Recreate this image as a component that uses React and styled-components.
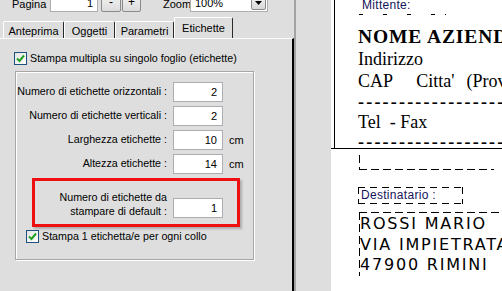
import React from "react";
import styled, { createGlobalStyle, css } from "styled-components";

const GlobalStyle = createGlobalStyle`
  html, body { margin: 0; padding: 0; }
  body { background: #dedede; }
`;

// dashed edges drawn as gradients, so dash length can follow the preview
const dashLine = (dir, d, g) =>
  `repeating-linear-gradient(${dir}, #000 0 ${d}px, transparent ${d}px ${d + g}px)`;

const dashed = ({ $sides = "trbl", $dash = 7, $gap = 5 }) => {
  const imgs = [];
  const pos = [];
  const size = [];
  if ($sides.includes("t")) {
    imgs.push(dashLine("90deg", $dash, $gap));
    pos.push("left top");
    size.push("100% 1px");
  }
  if ($sides.includes("b")) {
    imgs.push(dashLine("90deg", $dash, $gap));
    pos.push("left bottom");
    size.push("100% 1px");
  }
  if ($sides.includes("l")) {
    imgs.push(dashLine("180deg", $dash, $gap));
    pos.push("left top");
    size.push("1px 100%");
  }
  if ($sides.includes("r")) {
    imgs.push(dashLine("180deg", $dash, $gap));
    pos.push("right top");
    size.push("1px 100%");
  }
  return css`
    background-image: ${imgs.join(", ")};
    background-position: ${pos.join(", ")};
    background-size: ${size.join(", ")};
    background-repeat: no-repeat;
  `;
};

const Screen = styled.div`
  width: 502px;
  height: 291px;
  display: flex;
  overflow: hidden;
  background: #dedede;
  font-family: "Liberation Sans", Tahoma, Arial, sans-serif;
  font-size: 10.7px;
  color: #000;
`;

const LeftPane = styled.div`
  width: 294px;
  flex: none;
  display: flex;
  flex-direction: column;
`;

const Toolbar = styled.div`
  height: 21px;
  margin-top: -9px;
  display: flex;
  align-items: center;
  padding-left: 12px;
`;

const ToolLabel = styled.span`
  width: ${(p) => p.$w}px;
  margin-left: ${(p) => p.$ml || 0}px;
  padding-top: 5px;
  font-size: 11px;
`;

const ToolInput = styled.div`
  box-sizing: border-box;
  width: ${(p) => p.$w}px;
  height: 20px;
  background: #fff;
  border: 1px solid #abadb3;
  display: flex;
  align-items: flex-end;
  justify-content: ${(p) => (p.$left ? "flex-start" : "flex-end")};
  padding: 0 4px 2px;
  font-size: 11px;
  position: relative;
`;

const ToolButton = styled.div`
  box-sizing: border-box;
  width: ${(p) => p.$w}px;
  height: 20px;
  margin-left: ${(p) => p.$ml}px;
  border: 1px solid #8a8a8a;
  border-radius: 2px;
  background: linear-gradient(#f6f6f6, #dcdcdc);
  display: flex;
  align-items: flex-end;
  justify-content: center;
  padding-bottom: 2px;
  font-size: 12px;
`;

const DropButton = styled.div`
  position: absolute;
  right: 1px;
  top: 1px;
  width: 15px;
  height: 16px;
  box-sizing: border-box;
  border: 1px solid #8a8a8a;
  border-radius: 2px;
  background: linear-gradient(#f6f6f6, #d8d8d8);
  display: flex;
  align-items: flex-end;
  justify-content: center;
  padding-bottom: 4px;
`;

const TabStrip = styled.div`
  height: 20px;
  margin-top: 6px;
  padding-left: 3px;
  display: flex;
  align-items: flex-end;
`;

const Tab = styled.div`
  box-sizing: border-box;
  width: ${(p) => p.$w}px;
  height: ${(p) => (p.$active ? 21 : 17)}px;
  border-top: 1px solid #fff;
  border-left: 1px solid #fff;
  border-right: 1px solid #2a2a2a;
  border-top-left-radius: 2px;
  border-top-right-radius: 2px;
  display: flex;
  align-items: center;
  justify-content: center;
  padding-top: ${(p) => (p.$active ? 0 : 1)}px;
  font-size: 11px;
`;

const TabPanel = styled.div`
  flex: 1;
  border-top: 1px solid #fafafa;
  border-right: 2px solid #000;
  display: flex;
  flex-direction: column;
  align-items: flex-start;
`;

const CheckRow = styled.label`
  display: flex;
  align-items: center;
  gap: 3px;
  margin: ${(p) => p.$m};
  line-height: 13px;
`;

const CheckBox = styled.span`
  box-sizing: border-box;
  width: 13px;
  height: 13px;
  border: 1px solid #1c5180;
  background: linear-gradient(135deg, #e4e4e0, #fff);
  display: flex;
  align-items: center;
  justify-content: center;
`;

const GroupBox = styled.div`
  box-sizing: border-box;
  width: 239px;
  height: 189px;
  margin: 6px 0 0 15px;
  border: 1px solid #a7a7a7;
  box-shadow: inset 1px 1px 0 #fff, 1px 1px 0 #fff;
  padding-top: 10px;
  display: flex;
  flex-direction: column;
  align-items: flex-start;
`;

const FieldGrid = styled.div`
  display: grid;
  grid-template-columns: 151px 50px auto;
  grid-auto-rows: 20px;
  column-gap: 6px;
  row-gap: 4px;
  align-items: center;
`;

const FieldLabel = styled.span`
  justify-self: end;
  text-align: right;
  line-height: 13.5px;
  white-space: nowrap;
`;

const NumberBox = styled.div`
  box-sizing: border-box;
  width: 50px;
  height: 20px;
  background: #fff;
  border: 1px solid #abadb3;
  display: flex;
  align-items: center;
  justify-content: flex-end;
  padding-right: 5px;
  font-size: 11px;
`;

const Unit = styled.span`
  font-size: 11px;
`;

const Highlight = styled.div`
  box-sizing: border-box;
  width: 208px;
  height: 49px;
  margin: 4px 0 0 16px;
  border: 3px solid #ee1010;
  box-shadow: 2px 2px 2px rgba(0, 0, 0, 0.22);
  display: grid;
  grid-template-columns: 132px 50px;
  column-gap: 6px;
  align-items: end;
  padding-bottom: 6px;
`;

const Splitter = styled.div`
  width: 2px;
  flex: none;
  background: #a3a3a3;
`;

const PreviewArea = styled.div`
  flex: 1;
  display: flex;
  padding-left: 35px;
`;

const Page = styled.div`
  flex: 1;
  background: #fff;
  overflow: hidden;
  display: flex;
  flex-direction: column;
`;

const SenderLabel = styled.div`
  height: 148px;
  margin-left: 3px;
  border-left: 1px solid #000;
  padding-left: 24px;
  overflow: hidden;
  flex: none;
`;

const FieldTag = styled.div`
  box-sizing: border-box;
  width: ${(p) => p.$w}px;
  height: ${(p) => p.$h}px;
  margin: ${(p) => p.$m};
  padding: ${(p) => p.$pad};
  font-family: "Liberation Sans", Arial, sans-serif;
  font-size: 12px;
  letter-spacing: 0.3px;
  line-height: 14px;
  color: #14145a;
  white-space: nowrap;
  ${dashed}
`;

const Company = styled.div`
  margin: 11px 0 0 -1px;
  font-family: "Liberation Serif", "Times New Roman", serif;
  font-size: 18px;
  line-height: 22px;
`;

const CompanyName = styled.div`
  font-weight: bold;
  font-size: 19.5px;
  letter-spacing: 0.9px;
  white-space: nowrap;
`;

const TextLine = styled.div`
  line-height: ${(p) => p.$lh || 22}px;
  word-spacing: ${(p) => p.$ws || 0}px;
  white-space: pre;
`;

const Rule = styled.div`
  font-weight: bold;
  letter-spacing: 2.2px;
  line-height: 20px;
  white-space: nowrap;
  overflow: hidden;
`;

const Divider = styled.div`
  height: 1px;
  background: #000;
  flex: none;
`;

const RecipientLabel = styled.div`
  padding-left: 28px;
  display: flex;
  flex-direction: column;
  align-items: flex-start;
`;

const Address = styled.div`
  box-sizing: border-box;
  width: 200px;
  margin-top: 8px;
  padding: 2px 0 0 1px;
  font-family: "DejaVu Sans", Verdana, sans-serif;
  font-size: 16px;
  letter-spacing: 1.8px;
  line-height: 20.5px;
  white-space: nowrap;
  ${dashed}
`;

const Check = () => (
  <CheckBox>
    <svg width="9" height="9" viewBox="0 0 9 9">
      <path d="M1 4.5 L3.5 7 L8 1.5" fill="none" stroke="#21a121" strokeWidth="2" />
    </svg>
  </CheckBox>
);

const fields = [
  { label: "Numero di etichette orizzontali :", value: "2" },
  { label: "Numero di etichette verticali :", value: "2" },
  { label: "Larghezza etichette :", value: "10", unit: "cm" },
  { label: "Altezza etichette :", value: "14", unit: "cm" },
];

const tabs = [
  { name: "Anteprima", w: 61 },
  { name: "Oggetti", w: 51 },
  { name: "Parametri", w: 59 },
  { name: "Etichette", w: 59, active: true },
];

export default function App() {
  return (
    <Screen>
      <GlobalStyle />
      <LeftPane>
        <Toolbar>
          <ToolLabel $w={38}>Pagina</ToolLabel>
          <ToolInput $w={48}>1</ToolInput>
          <ToolButton $w={20} $ml={3}>-</ToolButton>
          <ToolButton $w={19} $ml={1}>+</ToolButton>
          <ToolLabel $w={27} $ml={22}>Zoom</ToolLabel>
          <ToolInput $w={78} $left>
            100%
            <DropButton>
              <svg width="7" height="4" viewBox="0 0 7 4">
                <path d="M0 0 H7 L3.5 4 Z" fill="#000" />
              </svg>
            </DropButton>
          </ToolInput>
        </Toolbar>
        <TabStrip>
          {tabs.map((t) => (
            <Tab key={t.name} $w={t.w} $active={t.active}>
              {t.name}
            </Tab>
          ))}
        </TabStrip>
        <TabPanel>
          <CheckRow $m="13px 0 0 14px">
            <Check />
            Stampa multipla su singolo foglio (etichette)
          </CheckRow>
          <GroupBox>
            <FieldGrid>
              {fields.map((f) => (
                <React.Fragment key={f.label}>
                  <FieldLabel>{f.label}</FieldLabel>
                  <NumberBox>{f.value}</NumberBox>
                  <Unit>{f.unit}</Unit>
                </React.Fragment>
              ))}
            </FieldGrid>
            <Highlight>
              <FieldLabel>
                Numero di etichette da
                <br />
                stampare di default :
              </FieldLabel>
              <NumberBox>1</NumberBox>
            </Highlight>
            <CheckRow $m="3px 0 0 10px">
              <Check />
              Stampa 1 etichetta/e per ogni collo
            </CheckRow>
          </GroupBox>
        </TabPanel>
      </LeftPane>
      <Splitter />
      <PreviewArea>
        <Page>
          <SenderLabel>
            <FieldTag $w={87} $h={25} $m="-10px 0 0 0" $pad="8px 0 0 3px" $sides="lbr" $dash={4} $gap={20}>
              Mittente:
            </FieldTag>
            <Company>
              <CompanyName>NOME AZIENDA</CompanyName>
              <TextLine>Indirizzo</TextLine>
              <TextLine $ws={1.5}>{"CAP    Citta'  (Prov)"}</TextLine>
              <Rule>------------------------------</Rule>
              <TextLine $lh={20}>{"Tel  - Fax"}</TextLine>
              <Rule>------------------------------</Rule>
            </Company>
          </SenderLabel>
          <Divider />
          <RecipientLabel>
            <FieldTag $w={135} $h={15} $m="6px 0 0 0" $sides="lb" $dash={8} $gap={4} />
            <FieldTag $w={105} $h={17} $m="17px 0 0 -1px" $pad="1px 0 0 3px" $sides="trbl" $dash={7} $gap={5}>
              Destinatario :
            </FieldTag>
            <Address $sides="tl" $dash={8} $gap={4}>
              <div>ROSSI MARIO</div>
              <div>VIA IMPIETRATA 12</div>
              <div>47900 RIMINI</div>
            </Address>
          </RecipientLabel>
        </Page>
      </PreviewArea>
    </Screen>
  );
}
